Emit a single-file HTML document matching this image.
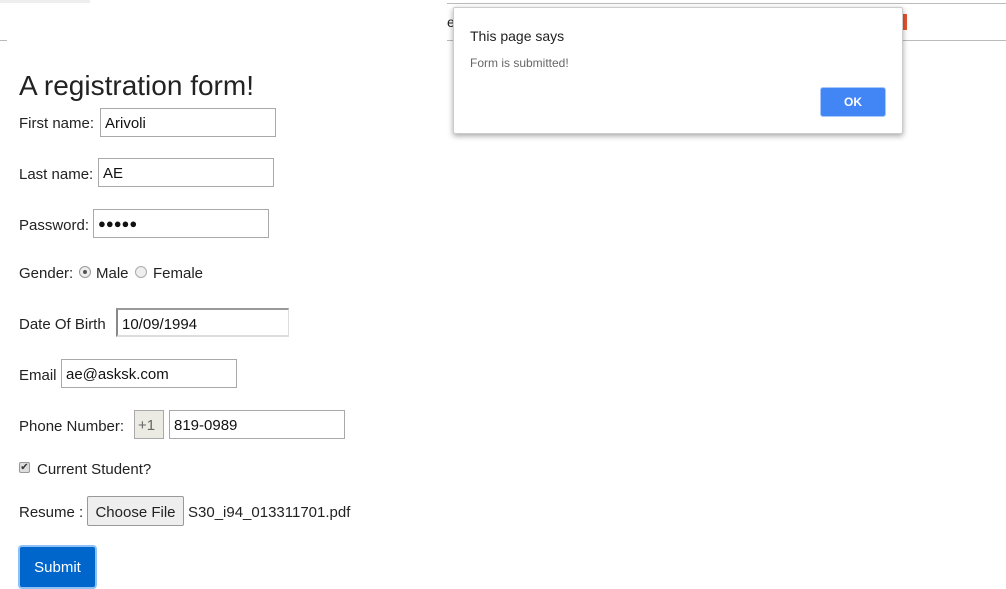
<!DOCTYPE html>
<html><head><style>
body{margin:0;width:1006px;height:574px;overflow:hidden;background:#fff;font-family:"Liberation Sans",sans-serif;color:#222;position:relative;font-size:15px}
.a{position:absolute;white-space:nowrap}
.in{position:absolute;border:1px solid #a9a9a9;box-sizing:border-box;height:29px;padding:0 4px;line-height:30px;font-size:15px;color:#111}
</style></head><body>
<div class="a" style="left:0;top:0;width:90px;height:3px;background:#eee"></div>
<div class="a" style="left:0;top:40px;width:7px;height:1px;background:#bbb"></div>
<div class="a" style="left:447px;top:40px;width:559px;height:1px;background:#bbb"></div>
<div class="a" style="left:447px;top:3px;width:559px;height:1px;background:#bbb"></div>
<div class="a" style="left:447px;top:14px;font-size:14px">e</div>
<div class="a" style="left:901px;top:14px;width:6px;height:16px;background:#e8542e"></div>

<div class="a" style="left:19px;top:70px;font-size:28px;color:#222">A registration form!</div>

<div class="a" style="left:19px;top:115px">First name:</div>
<div class="in" style="left:100px;top:108px;width:176px">Arivoli</div>

<div class="a" style="left:19px;top:166px">Last name:</div>
<div class="in" style="left:98px;top:158px;width:176px">AE</div>

<div class="a" style="left:19px;top:217px">Password:</div>
<div class="in" style="left:93px;top:209px;width:176px;font-size:13px;line-height:28px">●●●●●</div>

<div class="a" style="left:19px;top:265px">Gender:</div>
<div class="a" style="left:79px;top:266px;width:10px;height:10px;border:1px solid #999;border-radius:50%;background:#eee"><div style="position:absolute;left:3px;top:3px;width:4px;height:4px;border-radius:50%;background:#555"></div></div>
<div class="a" style="left:96px;top:265px">Male</div>
<div class="a" style="left:135px;top:266px;width:10px;height:10px;border:1px solid #aaa;border-radius:50%;background:#eee"></div>
<div class="a" style="left:153px;top:265px">Female</div>

<div class="a" style="left:19px;top:316px">Date Of Birth</div>
<div class="in" style="left:116px;top:308px;width:173px;border-color:#999 #ddd #ddd #888;border-width:2px 1px 2px 2px;line-height:29px">10/09/1994</div>

<div class="a" style="left:19px;top:367px">Email</div>
<div class="in" style="left:61px;top:359px;width:176px">ae@asksk.com</div>

<div class="a" style="left:19px;top:418px">Phone Number:</div>
<div class="in" style="left:134px;top:410px;width:30px;background:#ebebe4;color:#666;padding:0 3px">+1</div>
<div class="in" style="left:169px;top:410px;width:176px">819-0989</div>

<div class="a" style="left:19px;top:462px;width:11px;height:11px;border:1px solid #999;border-radius:2px;background:#ddd;box-sizing:border-box;font-size:10px;line-height:9px;text-align:center;color:#333">✔</div>
<div class="a" style="left:37px;top:461px">Current Student?</div>

<div class="a" style="left:19px;top:504px">Resume :</div>
<div class="a" style="left:87px;top:496px;width:97px;height:30px;box-sizing:border-box;border:1px solid #999;background:#eee;border-radius:2px;text-align:center;line-height:32px">Choose File</div>
<div class="a" style="left:188px;top:504px">S30_i94_013311701.pdf</div>

<div class="a" style="left:18px;top:545px;width:79px;height:44px;box-sizing:border-box;border:2px solid #8ec1f5;border-radius:4px;background:#0066cc;color:#fff;text-align:center;line-height:42px">Submit</div>

<div class="a" style="left:453px;top:7px;width:448px;height:125px;background:#fff;border:1px solid #ccc;border-radius:2px;box-shadow:0 2px 6px rgba(0,0,0,.35)">
<div class="a" style="left:16px;top:20px;font-size:14px;color:#222">This page says</div>
<div class="a" style="left:16px;top:48px;font-size:12px;color:#666">Form is submitted!</div>
<div class="a" style="left:366px;top:79px;width:66px;height:30px;box-sizing:border-box;border:1px solid #a8c8fa;border-radius:3px;background:#4285f4;color:#fff;font-weight:bold;font-size:12px;text-align:center;line-height:28px">OK</div>
</div>
</body></html>
